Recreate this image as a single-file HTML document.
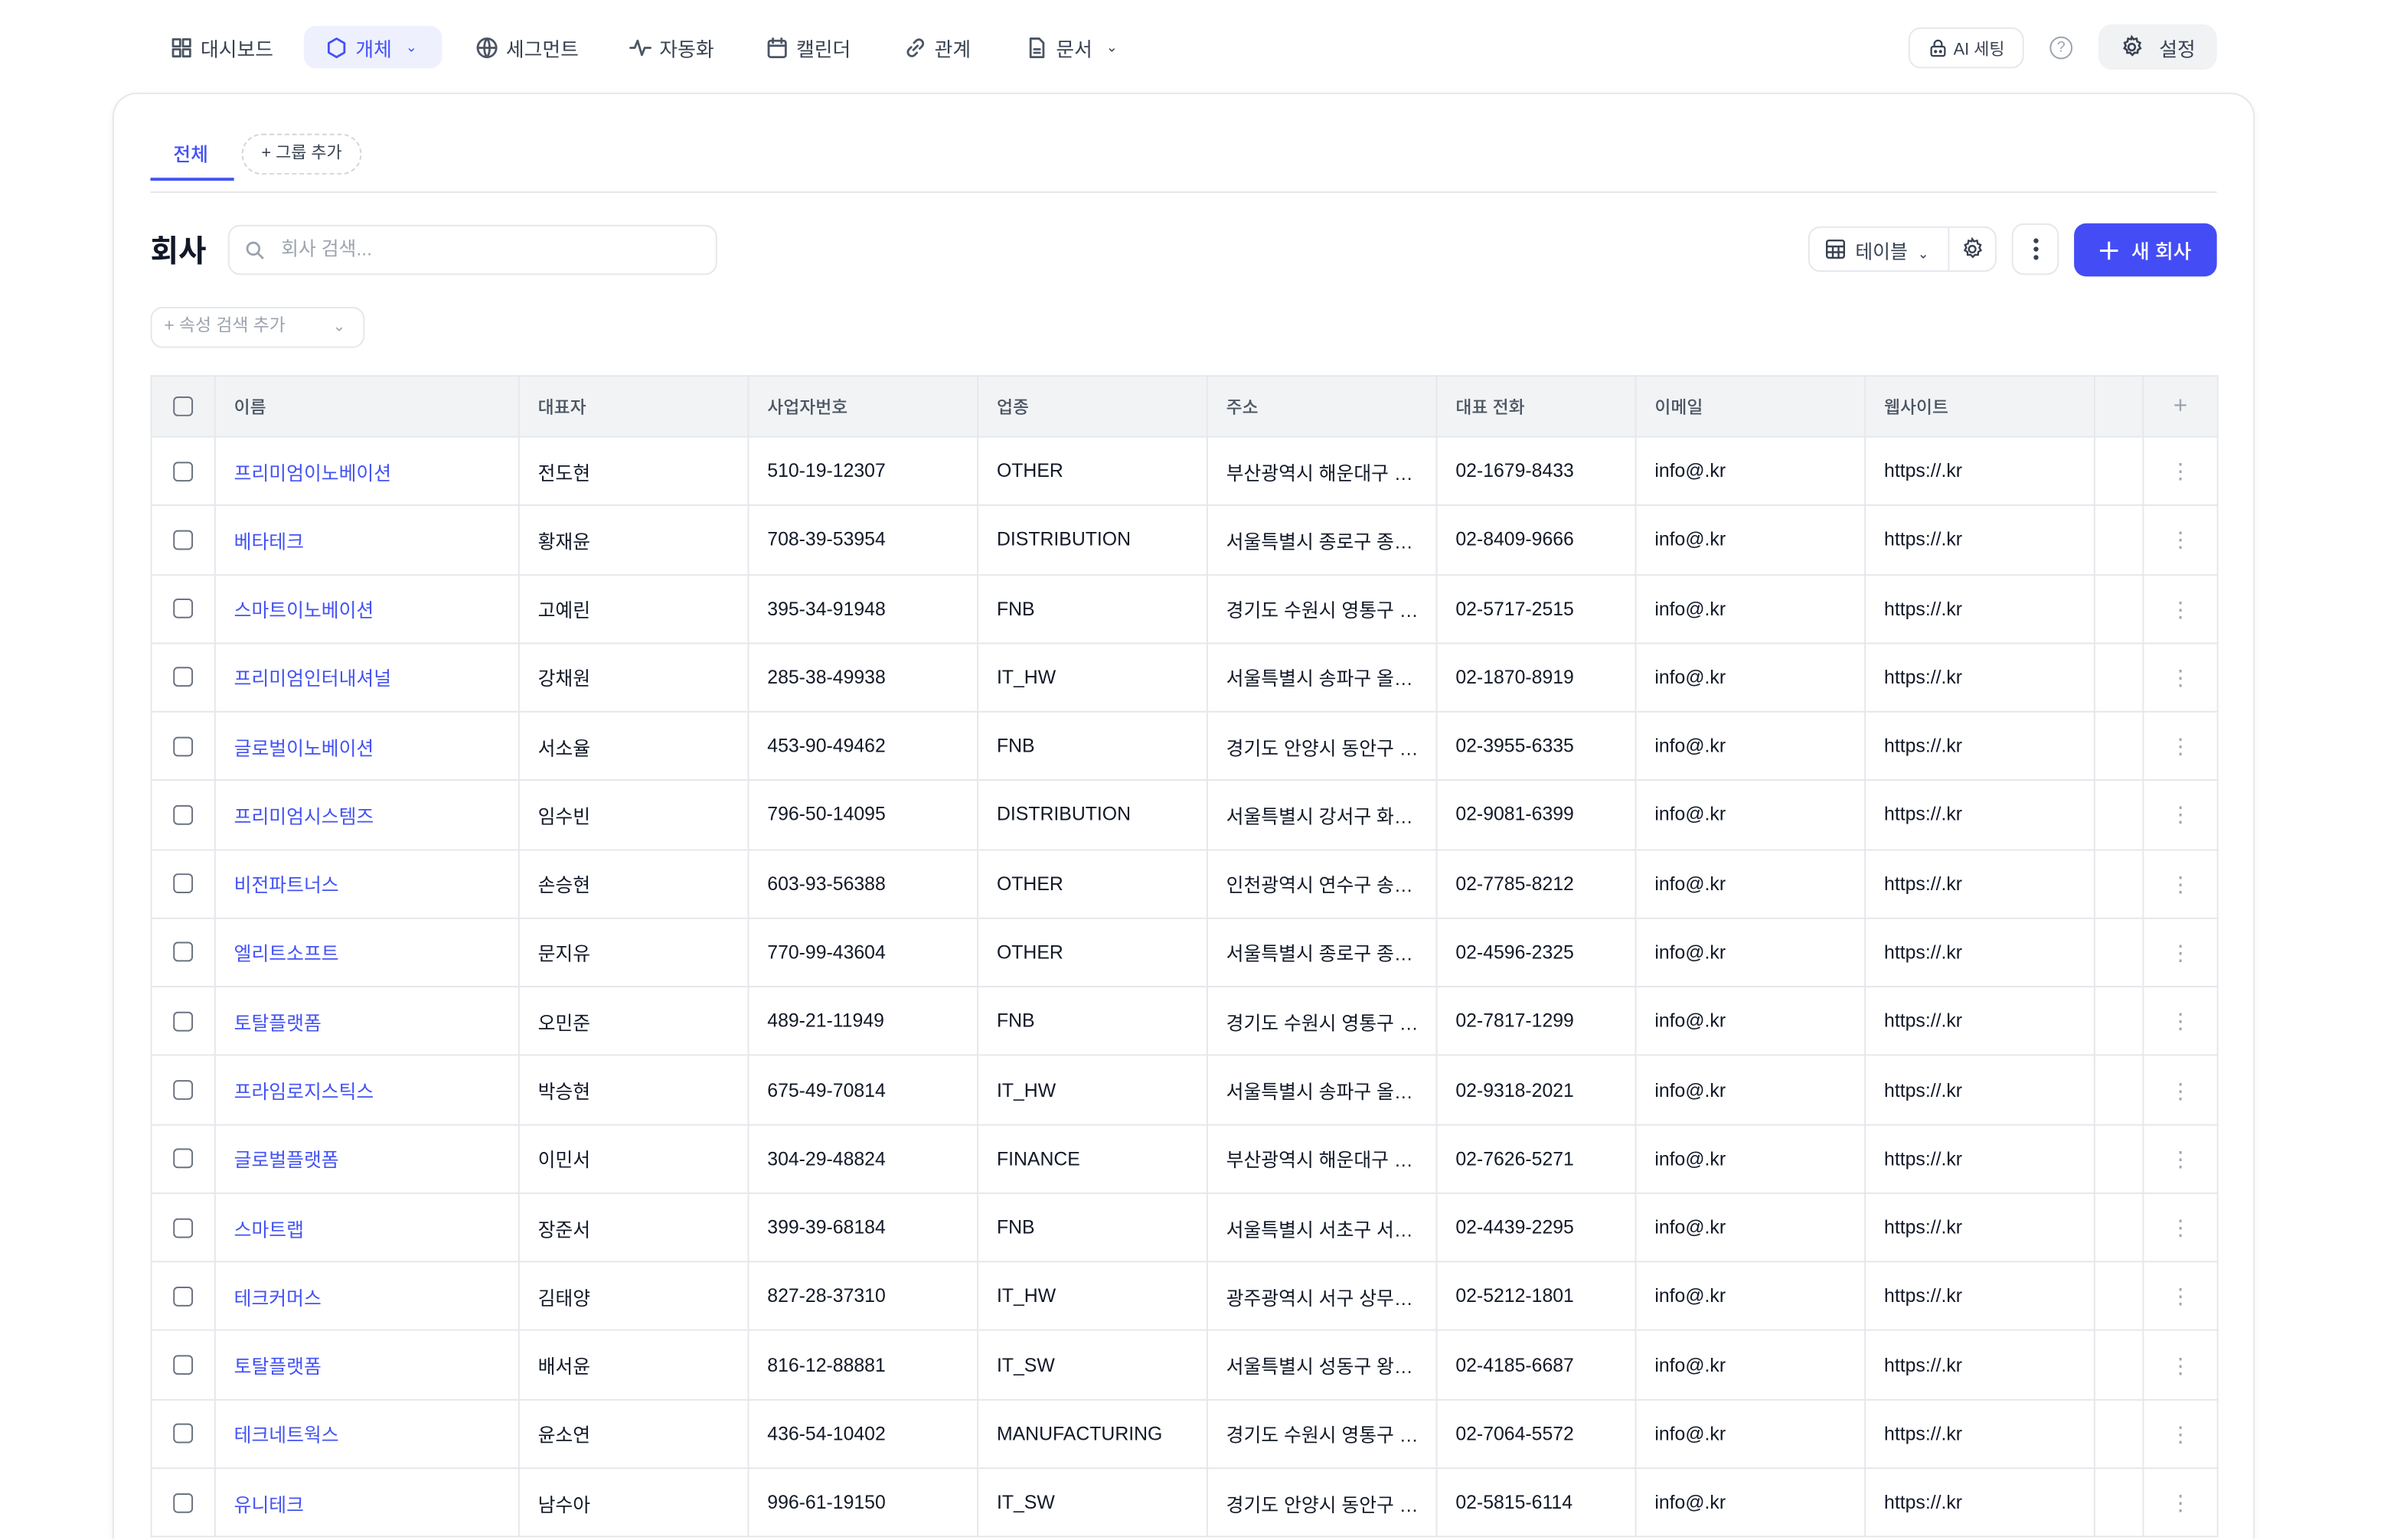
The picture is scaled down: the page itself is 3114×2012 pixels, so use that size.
<!DOCTYPE html>
<html><head><meta charset="utf-8">
<style>
*{box-sizing:border-box;margin:0;padding:0}
html,body{width:3114px;height:2012px;overflow:hidden;background:#fff}
#w{width:1569px;height:1013px;overflow:hidden;position:absolute;left:0;top:0;transform:scale(1.9847);transform-origin:0 0;font-family:"Liberation Sans","Noto Sans CJK KR",sans-serif;color:#111827}
.abs{position:absolute}
.nav{font-size:13px;color:#374151;display:flex;align-items:center;gap:5px;height:28px;top:17px}
.nav svg{width:15px;height:15px;fill:none;stroke:#4b5563;stroke-width:1.5;stroke-linecap:round;stroke-linejoin:round}
.card{left:74px;top:61px;width:1410px;height:952px;border:1px solid #e5e7eb;border-bottom:none;border-radius:16px 16px 0 0;box-shadow:0 1px 4px rgba(0,0,0,.06)}
table{border-collapse:collapse;table-layout:fixed;position:absolute;left:99px;top:247px;width:1360px;font-size:12.5px}
td,th{border:1px solid #e5e7eb;padding:0 12px;white-space:nowrap;overflow:hidden;text-align:left}
th{height:40px;background:#f2f3f5;font-weight:500;color:#4b5563;font-size:11.5px}
td{height:45.27px;color:#111827}
td.n{color:#4352f4}
.cb{width:13px;height:13px;border:1.3px solid #6b7280;border-radius:3px;display:block;margin:0 auto}
.dots{color:#9ca3af;text-align:center;font-size:14px;line-height:1}
</style></head><body><div id="w">
<div class="abs nav" style="left:112px"><svg viewBox="0 0 16 16"><rect x="2" y="2" width="5" height="5"/><rect x="9" y="2" width="5" height="5"/><rect x="2" y="9" width="5" height="5"/><rect x="9" y="9" width="5" height="5"/></svg>대시보드</div>
<div class="abs" style="left:200px;top:17px;width:91px;height:28px;background:#eef0fd;border-radius:8px"></div>
<div class="abs nav" style="left:214px;color:#4352f4"><svg viewBox="0 0 16 16" style="stroke:#4352f4"><path d="M8 1.5l5.5 3.2v6.6L8 14.5l-5.5-3.2V4.7z"/></svg>개체 <span style="font-size:9px;margin-left:4px">⌄</span></div>
<div class="abs nav" style="left:313px"><svg viewBox="0 0 16 16"><circle cx="8" cy="8" r="6.5"/><path d="M1.5 8h13M8 1.5c-2.5 3-2.5 10 0 13M8 1.5c2.5 3 2.5 10 0 13"/></svg>세그먼트</div>
<div class="abs nav" style="left:414px"><svg viewBox="0 0 16 16"><path d="M1 8h3l2-5 3 10 2-5h4"/></svg>자동화</div>
<div class="abs nav" style="left:504px"><svg viewBox="0 0 16 16"><rect x="2" y="3" width="12" height="11.5" rx="1.5"/><path d="M2 6.5h12M5 1.5v3M11 1.5v3"/></svg>캘린더</div>
<div class="abs nav" style="left:595px"><svg viewBox="0 0 16 16"><path d="M6.5 9.5l3-3M7 4.5l1.5-1.5a2.8 2.8 0 014 4L11 8.5M9 11.5L7.5 13a2.8 2.8 0 01-4-4L5 7.5"/></svg>관계</div>
<div class="abs nav" style="left:675px"><svg viewBox="0 0 16 16"><path d="M3.5 1.5h6l3 3v10h-9z"/><path d="M6 9h4M6 11.5h4"/></svg>문서 <span style="font-size:9px;margin-left:4px">⌄</span></div>
<div class="abs" style="left:1256px;top:18px;width:76px;height:27px;border:1px solid #e5e7eb;border-radius:8px;font-size:11px;color:#374151;display:flex;align-items:center;justify-content:center;gap:4px"><svg viewBox="0 0 16 16" width="13" height="13" style="fill:none;stroke:#374151;stroke-width:1.4"><rect x="2.5" y="7" width="11" height="7.5" rx="1.5"/><path d="M5 7V5a3 3 0 016 0v2"/><circle cx="6" cy="11" r=".6" fill="#374151"/><circle cx="10" cy="11" r=".6" fill="#374151"/></svg>AI 세팅</div>
<div class="abs" style="left:1349px;top:24px;width:15px;height:15px;border:1.4px solid #9ca3af;border-radius:50%;font-size:10px;color:#9ca3af;text-align:center;line-height:13px">?</div>
<div class="abs" style="left:1381px;top:16px;width:78px;height:30px;background:#f1f2f4;border-radius:9px;font-size:13px;color:#374151;display:flex;align-items:center;justify-content:center;gap:10px"><svg viewBox="0 0 16 16" width="16" height="16" style="fill:none;stroke:#374151;stroke-width:1.3"><circle cx="8" cy="8" r="2.2"/><path d="M8 1.3l1.2 1.6 2-.5.4 2 1.9.8-.8 1.9 1 1.7-1.7 1-.2 2-2-.1-1.4 1.5-1.4-1.5-2 .1-.2-2-1.7-1 1-1.7-.8-1.9 1.9-.8.4-2 2 .5z"/></svg>설정</div>

<div class="abs card"></div>
<div class="abs" style="left:114px;top:91px;font-size:12.5px;color:#4352f4;font-weight:500">전체</div>
<div class="abs" style="left:99px;top:117px;width:55px;height:2px;background:#4352f4"></div>
<div class="abs" style="left:159px;top:88px;width:79px;height:27px;border:1px dashed #d1d5db;border-radius:14px;font-size:11px;color:#374151;text-align:center;line-height:25px">+ 그룹 추가</div>
<div class="abs" style="left:99px;top:126px;width:1360px;height:1px;background:#e5e7eb"></div>
<div class="abs" style="left:99px;top:149px;font-size:20px;font-weight:700;color:#111827">회사</div>
<div class="abs" style="left:150px;top:148px;width:322px;height:33px;border:1px solid #e5e7eb;border-radius:8px;font-size:12.5px;color:#9ca3af;line-height:31px;padding-left:34px">회사 검색...
<svg class="abs" style="left:10px;top:9px" width="14" height="14" viewBox="0 0 16 16" fill="none" stroke="#9ca3af" stroke-width="1.6"><circle cx="6.5" cy="6.5" r="4.5"/><path d="M10 10l4 4"/></svg></div>
<div class="abs" style="left:1190px;top:149px;width:124px;height:30px;border:1px solid #e5e7eb;border-radius:8px"></div>
<div class="abs" style="left:1282px;top:149px;width:1px;height:30px;background:#e5e7eb"></div>
<svg class="abs" style="left:1201px;top:157px" width="14" height="14" viewBox="0 0 16 16" fill="none" stroke="#374151" stroke-width="1.4"><rect x="1.5" y="1.5" width="13" height="13" rx="1.5"/><path d="M1.5 6h13M1.5 10.3h13M6 6v8.5M10.3 6v8.5"/></svg>
<div class="abs" style="left:1221px;top:155px;font-size:12.5px;color:#374151">테이블 <span style="font-size:9px;margin-left:3px">⌄</span></div>
<svg class="abs" style="left:1290px;top:156px" width="16" height="16" viewBox="0 0 16 16" fill="none" stroke="#374151" stroke-width="1.2"><circle cx="8" cy="8" r="2.2"/><path d="M8 1.3l1.2 1.6 2-.5.4 2 1.9.8-.8 1.9 1 1.7-1.7 1-.2 2-2-.1-1.4 1.5-1.4-1.5-2 .1-.2-2-1.7-1 1-1.7-.8-1.9 1.9-.8.4-2 2 .5z"/></svg>
<div class="abs" style="left:1324px;top:147px;width:31px;height:34px;border:1px solid #e5e7eb;border-radius:8px"></div>
<svg class="abs" style="left:1336px;top:156px" width="8" height="16" viewBox="0 0 8 16" fill="#374151"><circle cx="4" cy="2.5" r="1.6"/><circle cx="4" cy="8" r="1.6"/><circle cx="4" cy="13.5" r="1.6"/></svg>
<div class="abs" style="left:1365px;top:147px;width:94px;height:35px;background:#444df5;border-radius:8px;color:#fff;font-size:13px;font-weight:500;display:flex;align-items:center;justify-content:center;gap:9px"><svg width="12" height="12" viewBox="0 0 12 12" stroke="#fff" stroke-width="1.5"><path d="M6 0v12M0 6h12"/></svg>새 회사</div>
<div class="abs" style="left:99px;top:202px;width:141px;height:27px;border:1px solid #e5e7eb;border-radius:8px;font-size:11.5px;color:#9ca3af;line-height:25px;padding-left:8px">+ 속성 검색 추가<span class="abs" style="left:119px;top:0;font-size:10px">⌄</span></div>

<table>
<colgroup><col style="width:42px"><col style="width:200px"><col style="width:151px"><col style="width:151px"><col style="width:151px"><col style="width:151px"><col style="width:131px"><col style="width:151px"><col style="width:151px"><col style="width:32px"><col style="width:49px"></colgroup>
<tr><th style="padding:0"><span class="cb"></span></th><th>이름</th><th>대표자</th><th>사업자번호</th><th>업종</th><th>주소</th><th>대표 전화</th><th>이메일</th><th>웹사이트</th><th></th><th style="text-align:center;font-size:16px;color:#9ca3af;font-weight:300">+</th></tr>
<tr><td style="padding:0"><span class="cb"></span></td><td class="n">프리미엄이노베이션</td><td>전도현</td><td>510-19-12307</td><td>OTHER</td><td>부산광역시 해운대구 …</td><td>02-1679-8433</td><td>info@.kr</td><td>https://.kr</td><td></td><td class="dots">⋮</td></tr>
<tr><td style="padding:0"><span class="cb"></span></td><td class="n">베타테크</td><td>황재윤</td><td>708-39-53954</td><td>DISTRIBUTION</td><td>서울특별시 종로구 종…</td><td>02-8409-9666</td><td>info@.kr</td><td>https://.kr</td><td></td><td class="dots">⋮</td></tr>
<tr><td style="padding:0"><span class="cb"></span></td><td class="n">스마트이노베이션</td><td>고예린</td><td>395-34-91948</td><td>FNB</td><td>경기도 수원시 영통구 …</td><td>02-5717-2515</td><td>info@.kr</td><td>https://.kr</td><td></td><td class="dots">⋮</td></tr>
<tr><td style="padding:0"><span class="cb"></span></td><td class="n">프리미엄인터내셔널</td><td>강채원</td><td>285-38-49938</td><td>IT_HW</td><td>서울특별시 송파구 올…</td><td>02-1870-8919</td><td>info@.kr</td><td>https://.kr</td><td></td><td class="dots">⋮</td></tr>
<tr><td style="padding:0"><span class="cb"></span></td><td class="n">글로벌이노베이션</td><td>서소율</td><td>453-90-49462</td><td>FNB</td><td>경기도 안양시 동안구 …</td><td>02-3955-6335</td><td>info@.kr</td><td>https://.kr</td><td></td><td class="dots">⋮</td></tr>
<tr><td style="padding:0"><span class="cb"></span></td><td class="n">프리미엄시스템즈</td><td>임수빈</td><td>796-50-14095</td><td>DISTRIBUTION</td><td>서울특별시 강서구 화…</td><td>02-9081-6399</td><td>info@.kr</td><td>https://.kr</td><td></td><td class="dots">⋮</td></tr>
<tr><td style="padding:0"><span class="cb"></span></td><td class="n">비전파트너스</td><td>손승현</td><td>603-93-56388</td><td>OTHER</td><td>인천광역시 연수구 송…</td><td>02-7785-8212</td><td>info@.kr</td><td>https://.kr</td><td></td><td class="dots">⋮</td></tr>
<tr><td style="padding:0"><span class="cb"></span></td><td class="n">엘리트소프트</td><td>문지유</td><td>770-99-43604</td><td>OTHER</td><td>서울특별시 종로구 종…</td><td>02-4596-2325</td><td>info@.kr</td><td>https://.kr</td><td></td><td class="dots">⋮</td></tr>
<tr><td style="padding:0"><span class="cb"></span></td><td class="n">토탈플랫폼</td><td>오민준</td><td>489-21-11949</td><td>FNB</td><td>경기도 수원시 영통구 …</td><td>02-7817-1299</td><td>info@.kr</td><td>https://.kr</td><td></td><td class="dots">⋮</td></tr>
<tr><td style="padding:0"><span class="cb"></span></td><td class="n">프라임로지스틱스</td><td>박승현</td><td>675-49-70814</td><td>IT_HW</td><td>서울특별시 송파구 올…</td><td>02-9318-2021</td><td>info@.kr</td><td>https://.kr</td><td></td><td class="dots">⋮</td></tr>
<tr><td style="padding:0"><span class="cb"></span></td><td class="n">글로벌플랫폼</td><td>이민서</td><td>304-29-48824</td><td>FINANCE</td><td>부산광역시 해운대구 …</td><td>02-7626-5271</td><td>info@.kr</td><td>https://.kr</td><td></td><td class="dots">⋮</td></tr>
<tr><td style="padding:0"><span class="cb"></span></td><td class="n">스마트랩</td><td>장준서</td><td>399-39-68184</td><td>FNB</td><td>서울특별시 서초구 서…</td><td>02-4439-2295</td><td>info@.kr</td><td>https://.kr</td><td></td><td class="dots">⋮</td></tr>
<tr><td style="padding:0"><span class="cb"></span></td><td class="n">테크커머스</td><td>김태양</td><td>827-28-37310</td><td>IT_HW</td><td>광주광역시 서구 상무…</td><td>02-5212-1801</td><td>info@.kr</td><td>https://.kr</td><td></td><td class="dots">⋮</td></tr>
<tr><td style="padding:0"><span class="cb"></span></td><td class="n">토탈플랫폼</td><td>배서윤</td><td>816-12-88881</td><td>IT_SW</td><td>서울특별시 성동구 왕…</td><td>02-4185-6687</td><td>info@.kr</td><td>https://.kr</td><td></td><td class="dots">⋮</td></tr>
<tr><td style="padding:0"><span class="cb"></span></td><td class="n">테크네트웍스</td><td>윤소연</td><td>436-54-10402</td><td>MANUFACTURING</td><td>경기도 수원시 영통구 …</td><td>02-7064-5572</td><td>info@.kr</td><td>https://.kr</td><td></td><td class="dots">⋮</td></tr>
<tr><td style="padding:0"><span class="cb"></span></td><td class="n">유니테크</td><td>남수아</td><td>996-61-19150</td><td>IT_SW</td><td>경기도 안양시 동안구 …</td><td>02-5815-6114</td><td>info@.kr</td><td>https://.kr</td><td></td><td class="dots">⋮</td></tr>
</table>
</div></body></html>
